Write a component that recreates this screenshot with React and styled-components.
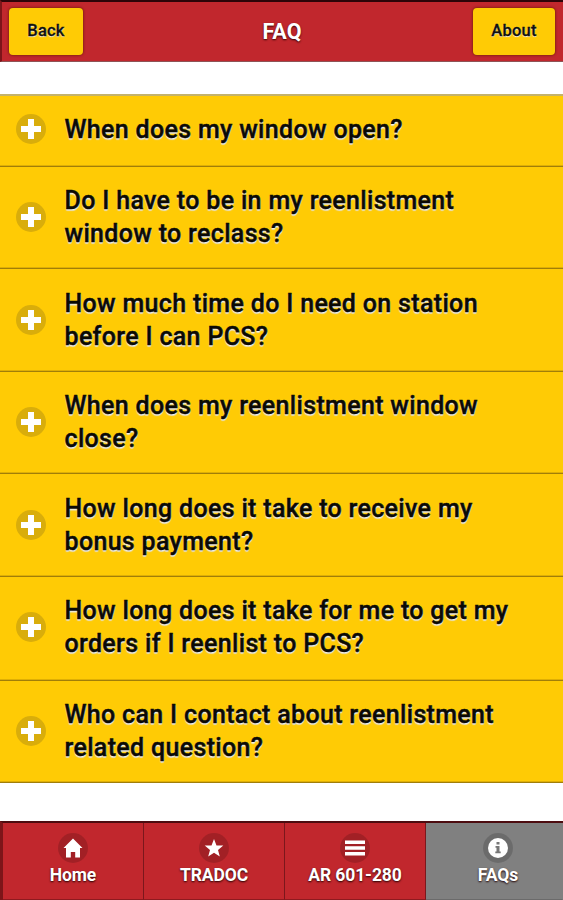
import React, { useState } from 'react'
import styled, { createGlobalStyle } from 'styled-components'

const questions = [
    { lines: ["When does my window open?"], height: 73, lift: 4 },
    { lines: ["Do I have to be in my reenlistment", "window to reclass?"], height: 102, lift: 2 },
    { lines: ["How much time do I need on station", "before I can PCS?"], height: 103, lift: 0 },
    { lines: ["When does my reenlistment window", "close?"], height: 102, lift: 2 },
    { lines: ["How long does it take to receive my", "bonus payment?"], height: 103, lift: 1 },
    { lines: ["How long does it take for me to get my", "orders if I reenlist to PCS?"], height: 104, lift: 4 },
    { lines: ["Who can I contact about reenlistment", "related question?"], height: 102, lift: 2 },
]

const tabs = [
    { name: "Home", icon: <HomeIcon /> },
    { name: "TRADOC", icon: <StarIcon /> },
    { name: "AR 601-280", icon: <BarsIcon /> },
    { name: "FAQs", icon: <InfoIcon /> },
]

function PlusIcon() {
    return (
        <svg width="20" height="20" viewBox="0 0 20 20">
            <path d="M7 0h6v7h7v6h-7v7H7v-7H0V7h7z" fill="#fff" />
        </svg>
    )
}

function HomeIcon() {
    return (
        <svg width="20" height="20" viewBox="0 0 20 20">
            <path d="M10 .5 19.500 10H17v9.500h-4.800V14H7.800v5.500H3V10H.5z" fill="#fff" />
        </svg>
    )
}

function StarIcon() {
    return (
        <svg width="20" height="20" viewBox="0 0 20 20">
            <path d="M10 1 12.500 7.400 19.300 7.600 14 12 15.800 18.500 10 14.800 4.200 18.500 6 12 .7 7.600 7.500 7.400z" fill="#fff" />
        </svg>
    )
}

function BarsIcon() {
    return (
        <svg width="20" height="20" viewBox="0 0 20 20">
            <path d="M0 2.500h20v3.500H0zM0 8.200h20v3.500H0zM0 13.900h20v3.500H0z" fill="#fff" />
        </svg>
    )
}

function InfoIcon() {
    return (
        <svg width="20" height="20" viewBox="0 0 20 20">
            <circle cx="10" cy="10" r="10" fill="#fff" />
            <path d="M8.500 4h3v2.500h-3zM7.500 8h4v5.500h1.200v1.700H7.300v-1.700h1.200V9.700h-1z" fill="#777" />
        </svg>
    )
}

function App() {
    const [active, setActive] = useState("FAQs");

  return (
    <>
    <GlobalStyle />
    <Page>
        <Header>
            <HeaderBtn $width={74}>Back</HeaderBtn>
            <Title>FAQ</Title>
            <HeaderBtn $width={82}>About</HeaderBtn>
        </Header>

        <List>
            {questions.map((q) => (
                <Row key={q.lines[0]} $height={q.height} $lift={q.lift}>
                    <Disc>
                        <PlusIcon />
                    </Disc>
                    <Question>
                        {q.lines.map((line) => <Line key={line}>{line}</Line>)}
                    </Question>
                </Row>
            ))}
        </List>

        <Footer>
            {tabs.map((tab) => (
                <Tab key={tab.name} $active={tab.name === active} onClick={() => setActive(tab.name)}>
                    <TabDisc>{tab.icon}</TabDisc>
                    <TabName>{tab.name}</TabName>
                </Tab>
            ))}
        </Footer>
    </Page>
    </>
  )
}

export default App

const GlobalStyle = createGlobalStyle`
* {
    box-sizing: border-box;
}
body {
    margin: 0;
    background: #fff;
    font-family: Roboto, sans-serif;
}
button {
    font-family: inherit;
    padding: 0;
    cursor: pointer;
}
`

const Page = styled.div`
height: 900px;
display: flex;
flex-direction: column;
overflow: hidden;
`

const Header = styled.header`
height: 62px;
flex-shrink: 0;
display: flex;
justify-content: space-between;
padding: 6px 8px 0 7px;
background: #c1272d;
border-top: 2px solid #2e0408;
border-left: 2px solid #7d1519;
border-bottom: 1px solid #8e5456;
`

const HeaderBtn = styled.button`
width: ${(props) => props.$width}px;
height: 47px;
padding-bottom: 3px;
background: #ffcb05;
border: none;
border-radius: 4px;
box-shadow: 0 0 2px 1px rgba(90, 30, 0, 0.5);
color: #111;
font-size: 16.5px;
font-weight: 500;
letter-spacing: 0.2px;
-webkit-text-stroke: 0.3px #111;
text-shadow: 0 1px 1px #f3f3f3;
`

const Title = styled.h1`
margin: 0;
padding-left: 8px;
color: #fff;
font-size: 21.5px;
font-weight: 700;
line-height: 47px;
text-shadow: 0 1px 2px #300;
`

const List = styled.ul`
margin: 32px 0 38px;
padding: 0;
list-style: none;
flex-shrink: 0;
`

const Row = styled.li`
height: ${(props) => props.$height}px;
display: flex;
align-items: center;
padding: 0 0 ${(props) => props.$lift}px 15.5px;
background: #ffcb05;
border-bottom: 1px solid #a17e09;
box-shadow: inset 0 -1px 0 #dfaf05;

&:first-child {
    border-top: 2px solid #c3b26c;
}
`

const Disc = styled.span`
width: 30px;
height: 30px;
flex-shrink: 0;
display: flex;
align-items: center;
justify-content: center;
border-radius: 50%;
background: #d9ad0b;
`

const Question = styled.div`
margin-left: 19px;
color: #0b0a05;
font-size: 25px;
font-weight: 500;
line-height: 33px;
letter-spacing: 0.33px;
white-space: nowrap;
-webkit-text-stroke: 0.45px #0b0a05;
text-shadow: 0 1px 1px #f3f3f3, 0 2px 1px rgba(225, 225, 225, 0.8);
`

const Line = styled.div`
height: 33px;
`

const Footer = styled.nav`
height: 79px;
flex-shrink: 0;
display: grid;
grid-template-columns: 141px 141px 141px 1fr;
border-top: 2px solid #4d0c10;
border-left: 3px solid #7d1519;
`

const Tab = styled.button`
display: flex;
flex-direction: column;
align-items: center;
padding-top: 10px;
border: none;
border-right: 1px solid ${(props) => (props.$active ? "#808080" : "#7b171c")};
border-bottom: 1px solid ${(props) => (props.$active ? "#6b6b6b" : "#8e1a1f")};
background: ${(props) => (props.$active ? "#808080" : "#c1272d")};

&:last-child {
    padding-left: 8px;
}
`

const TabDisc = styled.span`
width: 30px;
height: 30px;
display: flex;
align-items: center;
justify-content: center;
border-radius: 50%;
background: rgba(0, 0, 0, 0.16);
`

const TabName = styled.span`
margin-top: 1px;
color: #fff;
font-size: 17.5px;
font-weight: 700;
line-height: 22px;
letter-spacing: -0.1px;
text-shadow: 0 1px 2px #200;
`
